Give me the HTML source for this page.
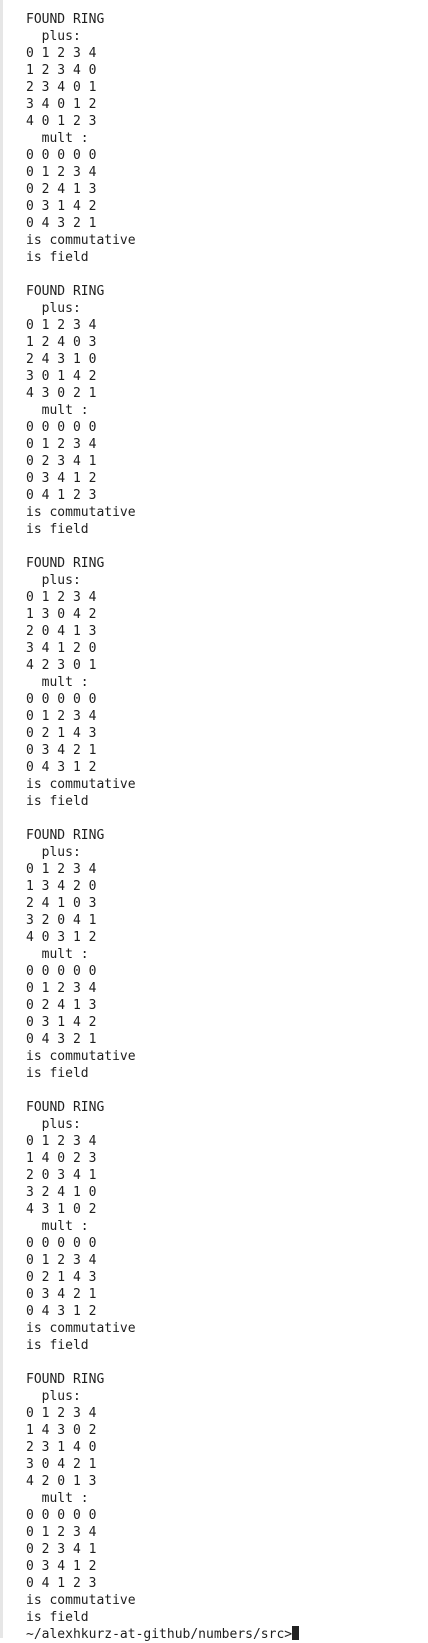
<!DOCTYPE html>
<html><head><meta charset="utf-8">
<style>
html,body{margin:0;padding:0;background:#fff;}
body{width:428px;height:1638px;overflow:hidden;position:relative;}
.bar{position:absolute;left:0;top:0;width:3px;height:1638px;background:#e6e6e6;}
pre{margin:0;position:absolute;left:26px;top:11px;font-family:"DejaVu Sans Mono","Liberation Mono",monospace;font-size:13px;line-height:17px;color:#1e1e1e;}
.cur{display:inline-block;width:7px;height:14px;background:#222;vertical-align:-2px;}
</style></head><body>
<div class="bar"></div>
<pre>FOUND RING
  plus:
0 1 2 3 4
1 2 3 4 0
2 3 4 0 1
3 4 0 1 2
4 0 1 2 3
  mult :
0 0 0 0 0
0 1 2 3 4
0 2 4 1 3
0 3 1 4 2
0 4 3 2 1
is commutative
is field

FOUND RING
  plus:
0 1 2 3 4
1 2 4 0 3
2 4 3 1 0
3 0 1 4 2
4 3 0 2 1
  mult :
0 0 0 0 0
0 1 2 3 4
0 2 3 4 1
0 3 4 1 2
0 4 1 2 3
is commutative
is field

FOUND RING
  plus:
0 1 2 3 4
1 3 0 4 2
2 0 4 1 3
3 4 1 2 0
4 2 3 0 1
  mult :
0 0 0 0 0
0 1 2 3 4
0 2 1 4 3
0 3 4 2 1
0 4 3 1 2
is commutative
is field

FOUND RING
  plus:
0 1 2 3 4
1 3 4 2 0
2 4 1 0 3
3 2 0 4 1
4 0 3 1 2
  mult :
0 0 0 0 0
0 1 2 3 4
0 2 4 1 3
0 3 1 4 2
0 4 3 2 1
is commutative
is field

FOUND RING
  plus:
0 1 2 3 4
1 4 0 2 3
2 0 3 4 1
3 2 4 1 0
4 3 1 0 2
  mult :
0 0 0 0 0
0 1 2 3 4
0 2 1 4 3
0 3 4 2 1
0 4 3 1 2
is commutative
is field

FOUND RING
  plus:
0 1 2 3 4
1 4 3 0 2
2 3 1 4 0
3 0 4 2 1
4 2 0 1 3
  mult :
0 0 0 0 0
0 1 2 3 4
0 2 3 4 1
0 3 4 1 2
0 4 1 2 3
is commutative
is field
~/alexhkurz-at-github/numbers/src&gt;<span class="cur"></span></pre>
</body></html>
